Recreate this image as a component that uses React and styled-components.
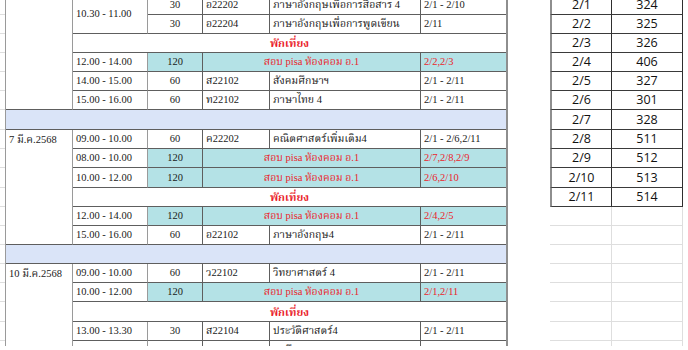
import React from "react";
import styled, { createGlobalStyle, css } from "styled-components";

const rowHeights = [19, 19, 19, 19, 19, 19, 20, 19, 19, 20, 19, 19, 19, 19, 19, 19, 20, 19, 19];
const rowsTemplate = rowHeights.map(h => `${h}px`).join(" ");

const colors = {
  line: "#5e5e5e",
  softLine: "#9a9a9a",
  grid: "#dedede",
  teal: "#b4e2e6",
  blue: "#dae4f8",
  red: "#ea1f2c",
  text: "#1a1a1a",
};

const rooms = [
  ["2/1", "324"],
  ["2/2", "325"],
  ["2/3", "326"],
  ["2/4", "406"],
  ["2/5", "327"],
  ["2/6", "301"],
  ["2/7", "328"],
  ["2/8", "511"],
  ["2/9", "512"],
  ["2/10", "513"],
  ["2/11", "514"],
];

const GlobalStyle = createGlobalStyle`
  html, body {
    margin: 0;
    padding: 0;
    background: #ffffff;
    overflow: hidden;
  }
`;

const Page = styled.div`
  display: flex;
  align-items: flex-start;
  width: 688px;
  height: 350px;
  overflow: hidden;
  margin-top: -4px;
  font-family: "Liberation Serif", "Noto Serif Thai", "Noto Sans Thai", serif;
  color: ${colors.text};
`;

const Gutter = styled.div`
  display: grid;
  grid-template-rows: ${rowsTemplate};
  width: 5px;
`;

const GutterLine = styled.div`
  border-bottom: 1px solid ${colors.grid};
`;

const Schedule = styled.div`
  display: grid;
  grid-template-columns: 67px 75px 55px 67px 151px 85px;
  grid-template-rows: ${rowsTemplate};
  border-left: 1px solid ${colors.softLine};
  border-right: 2px solid #8e8e8e;
`;

const Cell = styled.div`
  grid-row: ${p => p.$r} / span ${p => p.$rs || 1};
  grid-column: ${p => p.$c} / span ${p => p.$cs || 1};
  display: flex;
  align-items: flex-end;
  justify-content: ${p => (p.$center ? "center" : "flex-start")};
  padding: 0 3px 2px;
  box-sizing: border-box;
  min-width: 0;
  white-space: nowrap;
  overflow: hidden;
  font-size: 10.5px;
  line-height: 14px;
  background: ${p => p.$bg || "#ffffff"};
  color: ${p => (p.$red ? colors.red : colors.text)};
  border-bottom: 1px solid ${colors.line};
  border-right: 1px solid ${p => (p.$c <= 2 ? colors.softLine : colors.line)};
  ${p =>
    p.$c + (p.$cs || 1) > 6 &&
    css`
      border-right: none;
    `}
`;

const TimeCell = styled(Cell)`
  align-items: ${p => (p.$rs > 1 ? "center" : "flex-end")};
`;

const DateCell = styled(Cell)`
  align-items: flex-start;
  padding-top: 3px;
`;

const BreakLabel = styled(Cell)`
  font-weight: bold;
  font-size: 11px;
`;

const Spacer = styled.div`
  width: 42px;
  flex: none;
`;

const RoomGrid = styled.div`
  display: grid;
  grid-template-columns: 62px 71px 4px;
  grid-template-rows: ${rowsTemplate};
  font-family: "Open Sans", "Liberation Sans", sans-serif;
`;

const RoomCell = styled.div`
  display: flex;
  align-items: flex-end;
  justify-content: center;
  padding-bottom: 1px;
  box-sizing: border-box;
  font-size: 12.5px;
  line-height: 16px;
  color: #111111;
  border-bottom: 1px solid #3a3a3a;
  border-right: 1px solid #2e2e2e;
  ${p =>
    p.$first &&
    css`
      border-left: 2px solid #8e8e8e;
    `}
`;

const BlankCell = styled.div`
  border-bottom: 1px solid ${colors.grid};
  border-right: 1px solid ${colors.grid};
`;

const EdgeCell = styled.div``;

const Lesson = ({ r, time, min, code, subject, cls, timeSpan = 1, skipTime }) => (
  <>
    {!skipTime && (
      <TimeCell $r={r} $c={2} $rs={timeSpan}>
        {time}
      </TimeCell>
    )}
    <Cell $r={r} $c={3} $center>
      {min}
    </Cell>
    <Cell $r={r} $c={4}>
      {code}
    </Cell>
    <Cell $r={r} $c={5}>
      {subject}
    </Cell>
    <Cell $r={r} $c={6}>
      {cls}
    </Cell>
  </>
);

const Exam = ({ r, time, cls }) => (
  <>
    <TimeCell $r={r} $c={2}>
      {time}
    </TimeCell>
    <Cell $r={r} $c={3} $center $bg={colors.teal}>
      120
    </Cell>
    <Cell $r={r} $c={4} $cs={2} $center $red $bg={colors.teal}>
      สอบ pisa ห้องคอม อ.1
    </Cell>
    <Cell $r={r} $c={6} $red $bg={colors.teal}>
      {cls}
    </Cell>
  </>
);

const Break = ({ r }) => (
  <BreakLabel $r={r} $c={2} $cs={5} $center $red>
    พักเที่ยง
  </BreakLabel>
);

const Divider = ({ r }) => <Cell $r={r} $c={1} $cs={6} $bg={colors.blue} />;

const App = () => {
  const blankRows = rowHeights.length - rooms.length;
  return (
    <>
      <GlobalStyle />
      <Page>
        <Gutter>
          {rowHeights.map((_, i) => (
            <GutterLine key={i} />
          ))}
        </Gutter>

        <Schedule>
          <DateCell $r={1} $rs={6} $c={1} />
          <Lesson r={1} time="10.30 - 11.00" timeSpan={2} min="30" code="อ22202" subject="ภาษาอังกฤษเพื่อการสื่อสาร 4" cls="2/1 - 2/10" />
          <Lesson r={2} skipTime min="30" code="อ22204" subject="ภาษาอังกฤษเพื่อการพูดเขียน" cls="2/11" />
          <Break r={3} />
          <Exam r={4} time="12.00 - 14.00" cls="2/2,2/3" />
          <Lesson r={5} time="14.00 - 15.00" min="60" code="ส22102" subject="สังคมศึกษาฯ" cls="2/1 - 2/11" />
          <Lesson r={6} time="15.00 - 16.00" min="60" code="ท22102" subject="ภาษาไทย 4" cls="2/1 - 2/11" />
          <Divider r={7} />

          <DateCell $r={8} $rs={6} $c={1}>
            7 มี.ค.2568
          </DateCell>
          <Lesson r={8} time="09.00 - 10.00" min="60" code="ค22202" subject="คณิตศาสตร์เพิ่มเติม4" cls="2/1 - 2/6,2/11" />
          <Exam r={9} time="08.00 - 10.00" cls="2/7,2/8,2/9" />
          <Exam r={10} time="10.00 - 12.00" cls="2/6,2/10" />
          <Break r={11} />
          <Exam r={12} time="12.00 - 14.00" cls="2/4,2/5" />
          <Lesson r={13} time="15.00 - 16.00" min="60" code="อ22102" subject="ภาษาอังกฤษ4" cls="2/1 - 2/11" />
          <Divider r={14} />

          <DateCell $r={15} $rs={5} $c={1}>
            10 มี.ค.2568
          </DateCell>
          <Lesson r={15} time="09.00 - 10.00" min="60" code="ว22102" subject="วิทยาศาสตร์ 4" cls="2/1 - 2/11" />
          <Exam r={16} time="10.00 - 12.00" cls="2/1,2/11" />
          <Break r={17} />
          <Lesson r={18} time="13.00 - 13.30" min="30" code="ส22104" subject="ประวัติศาสตร์4" cls="2/1 - 2/11" />
          <Lesson r={19} time="13.30 - 14.30" min="60" code="พ22102" subject="สุขศึกษา" cls="2/1 - 2/11" />
        </Schedule>

        <Spacer />

        <RoomGrid>
          {rooms.map(([cls, room]) => (
            <React.Fragment key={cls}>
              <RoomCell $first>{cls}</RoomCell>
              <RoomCell>{room}</RoomCell>
              <EdgeCell />
            </React.Fragment>
          ))}
          {Array.from({ length: blankRows }).map((_, i) => (
            <React.Fragment key={`b${i}`}>
              <BlankCell />
              <BlankCell />
              <EdgeCell />
            </React.Fragment>
          ))}
        </RoomGrid>
      </Page>
    </>
  );
};

export default App;
